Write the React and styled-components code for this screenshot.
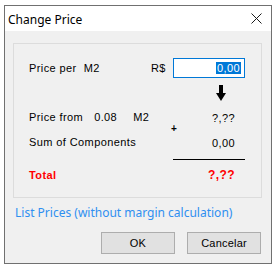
import React from 'react';
import styled, { createGlobalStyle } from 'styled-components';

const Global = createGlobalStyle`
  html, body {
    margin: 0;
    padding: 0;
    background: #ffffff;
  }
  body {
    font-family: "Liberation Sans", Arial, sans-serif;
  }
`;

const Window = styled.div`
  margin: 5px 0 0 4px;
  width: 268px;
  height: 259px;
  box-sizing: border-box;
  border: 1px solid #707070;
  background: #f0f0f0;
  display: flex;
  flex-direction: column;
`;

const TitleBar = styled.div`
  height: 25px;
  background: #ffffff;
  display: flex;
  align-items: center;
  justify-content: space-between;
  padding: 0 9px 0 3px;
`;

const Title = styled.span`
  font-family: "Noto Sans", "Open Sans", sans-serif;
  font-size: 12px;
  color: #000;
  padding-top: 1px;
`;

const GroupBox = styled.div`
  margin: 12px 0 0 8px;
  width: 249px;
  height: 155px;
  box-sizing: border-box;
  border: 1px solid #dcdcdc;
  padding-left: 15px;
`;

const Row = styled.div`
  display: grid;
  grid-template-columns: 122px 22px 72px;
  align-items: center;
  height: ${(p) => p.$h}px;
  margin-top: ${(p) => p.$mt || 0}px;
  font-size: 11px;
  letter-spacing: 0.4px;
  color: #000;
`;

const Label = styled.div`
  display: flex;
  white-space: nowrap;
  color: ${(p) => (p.$red ? '#ff0000' : '#000')};
  font-weight: ${(p) => (p.$bold ? 'bold' : 'normal')};
`;

const Part = styled.span`
  margin-left: ${(p) => p.$ml || 0}px;
`;

const Currency = styled.span`
  grid-column: 2;
`;

const Input = styled.div`
  grid-column: 3;
  height: 20px;
  box-sizing: border-box;
  border: 1px solid #0078d7;
  background: #fff;
  display: flex;
  align-items: center;
  justify-content: flex-end;
  padding-right: 3px;
`;

const Selected = styled.span`
  background: #0078d7;
  color: #fff;
  line-height: 12px;
  padding: 0 1px;
`;

const Value = styled.div`
  grid-column: 3;
  text-align: right;
  padding-right: 10px;
  padding-top: ${(p) => p.$pt || 0}px;
  color: ${(p) => (p.$red ? '#ff0000' : '#000')};
  font-weight: ${(p) => (p.$bold ? 'bold' : 'normal')};
  font-size: ${(p) => (p.$bold ? 12 : 11)}px;
`;

const ArrowCell = styled.div`
  grid-column: 3;
  padding-left: 43px;
  display: flex;
`;

const Plus = styled.div`
  grid-column: 3;
  margin-left: -2px;
  font-size: 10px;
  font-weight: bold;
  line-height: 10px;
`;

const Rule = styled.div`
  grid-column: 3;
  height: 1px;
  background: #000;
`;

const LinkText = styled.div`
  margin: 7px 0 0 10px;
  font-family: "Noto Sans", "Open Sans", sans-serif;
  font-size: 12px;
  line-height: 16px;
  color: #2f8ff0;
  white-space: nowrap;
`;

const Buttons = styled.div`
  margin-top: auto;
  margin-bottom: 9px;
  display: flex;
  justify-content: flex-end;
  gap: 12px;
  padding-right: 10px;
`;

const Button = styled.button`
  width: 74px;
  height: 22px;
  box-sizing: border-box;
  border: 1px solid #adadad;
  background: #e1e1e1;
  font-family: "Liberation Sans", Arial, sans-serif;
  font-size: 11px;
  letter-spacing: 0.2px;
  color: #000;
  padding: 0;
`;

const CloseIcon = () => (
  <svg width="11" height="11" viewBox="0 0 11 11">
    <path d="M0.5 0.5 L10.5 10.5 M10.5 0.5 L0.5 10.5" stroke="#1a1a1a" strokeWidth="1" fill="none" />
  </svg>
);

const DownArrow = () => (
  <svg width="10" height="16" viewBox="0 0 10 16">
    <path d="M3 0 H7 V8 H10 L5 16 L0 8 H3 Z" fill="#000" />
  </svg>
);

const App = () => (
  <>
    <Global />
    <Window>
      <TitleBar>
        <Title>Change Price</Title>
        <CloseIcon />
      </TitleBar>
      <GroupBox>
        <Row $h={20} $mt={14}>
          <Label>
            <Part>Price per</Part>
            <Part $ml={7}>M2</Part>
          </Label>
          <Currency>R$</Currency>
          <Input>
            <Selected>0,00</Selected>
          </Input>
        </Row>
        <Row $h={16} $mt={7}>
          <ArrowCell>
            <DownArrow />
          </ArrowCell>
        </Row>
        <Row $h={14} $mt={9}>
          <Label>
            <Part>Price from</Part>
            <Part $ml={11}>0.08</Part>
            <Part $ml={16}>M2</Part>
          </Label>
          <Value $pt={2}>?,??</Value>
        </Row>
        <Row $h={10}>
          <Plus>+</Plus>
        </Row>
        <Row $h={14}>
          <Label>Sum of Components</Label>
          <Value $pt={3}>0,00</Value>
        </Row>
        <Row $h={1} $mt={11}>
          <Rule />
        </Row>
        <Row $h={14} $mt={7}>
          <Label $red $bold>Total</Label>
          <Value $red $bold $pt={1}>?,??</Value>
        </Row>
      </GroupBox>
      <LinkText>List Prices (without margin calculation)</LinkText>
      <Buttons>
        <Button>OK</Button>
        <Button>Cancelar</Button>
      </Buttons>
    </Window>
  </>
);

export default App;
